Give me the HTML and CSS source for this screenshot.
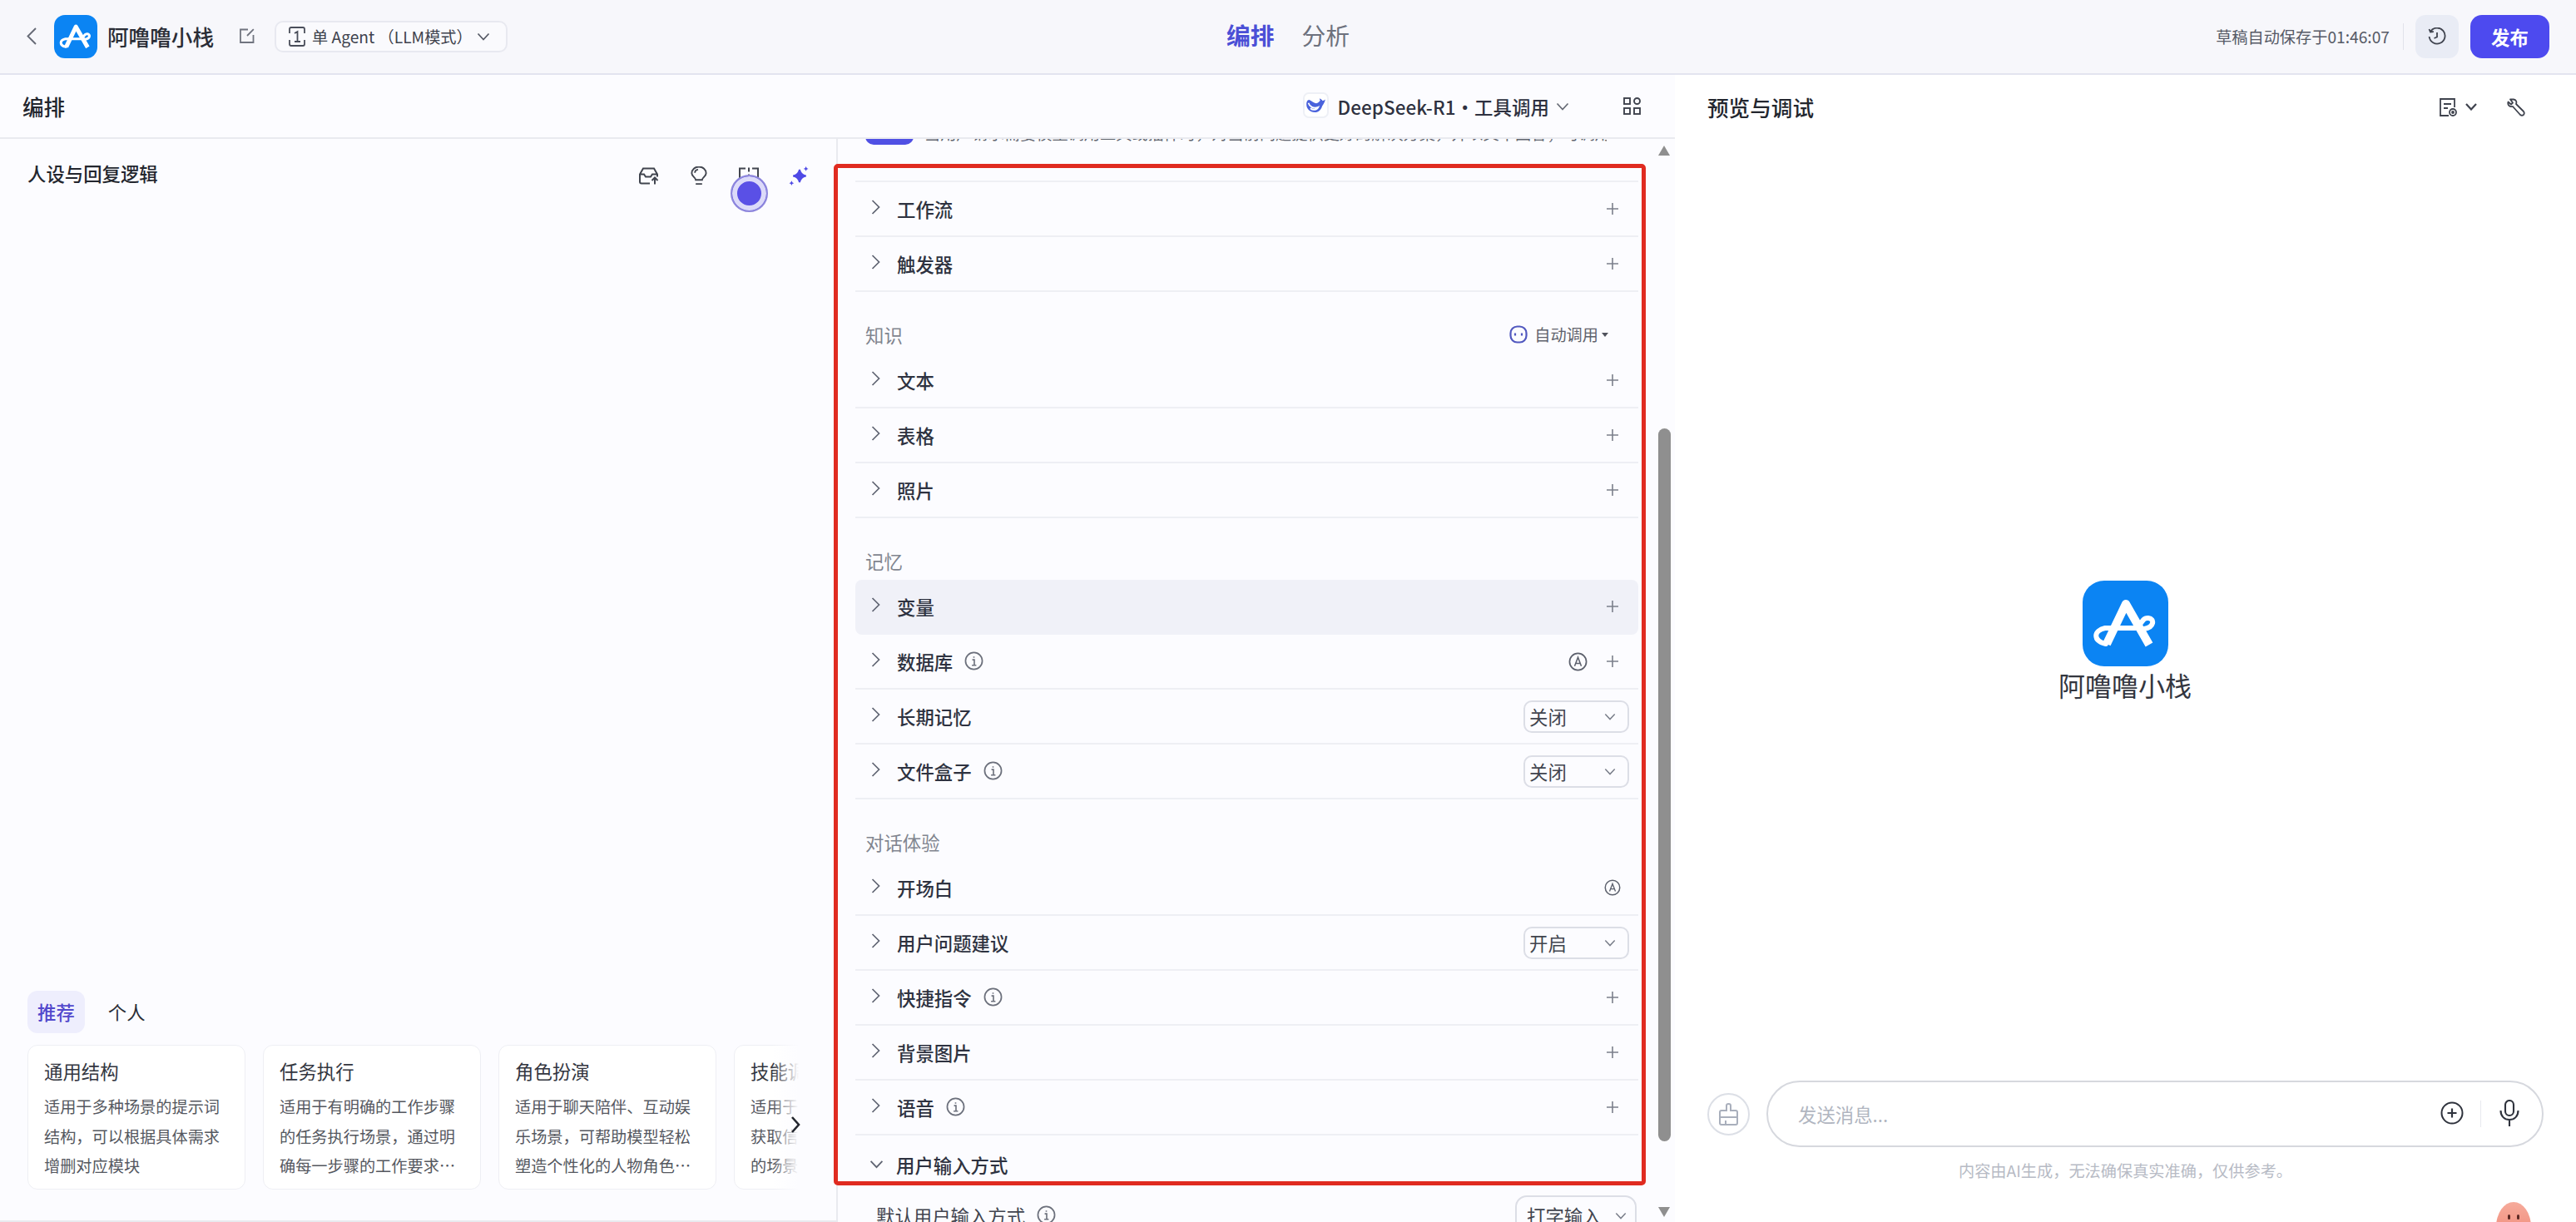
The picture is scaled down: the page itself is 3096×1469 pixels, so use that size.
FILE: index.html
```html
<!DOCTYPE html>
<html lang="zh">
<head>
<meta charset="utf-8">
<title>阿噜噜小栈</title>
<link rel="stylesheet" href="styles.css">
</head>
<body>
<svg class="defs" width="0" height="0" aria-hidden="true">
  <symbol id="logo" viewBox="0 0 103 103">
    <rect width="103" height="103" rx="26" fill="#0b84f3"/>
    <path d="M29 76 L52 28 L80 77" fill="none" stroke="#fff" stroke-width="10" stroke-linejoin="round"/>
    <path d="M28 76 C12 72 13 60 27 57 L65 57 C72 51 72 44 79 45 C87 46 86 56 74 58" fill="none" stroke="#fff" stroke-width="6" stroke-linecap="round"/>
  </symbol>
  <symbol id="chev-r" viewBox="0 0 11 20"><path d="M1.5 2 L9.5 10 L1.5 18" fill="none" stroke="#5f6472" stroke-width="1.7"/></symbol>
  <symbol id="chev-d" viewBox="0 0 16 10"><path d="M1.5 1.5 L8 8.5 L14.5 1.5" fill="none" stroke="currentColor" stroke-width="1.7"/></symbol>
  <symbol id="plus" viewBox="0 0 14 14"><path d="M7 0 V14 M0 7 H14" stroke="#7b7f8b" stroke-width="1.6"/></symbol>
  <symbol id="info" viewBox="0 0 24 24"><circle cx="12" cy="12" r="10.5" fill="none" stroke="#6c707c" stroke-width="1.8"/><path d="M10 10.5 H12.5 V17.5 M9.5 17.5 H15 M12 6.4 V8.2" fill="none" stroke="#6c707c" stroke-width="1.7"/></symbol>
  <symbol id="auto" viewBox="0 0 24 24"><circle cx="12" cy="12" r="10.5" fill="none" stroke="#5d616d" stroke-width="1.8"/><path d="M7.8 17.5 L12 6.5 L16.2 17.5 M9.2 14 H14.8" fill="none" stroke="#5d616d" stroke-width="1.6"/></symbol>
</svg>

<header class="topbar">
  <div class="top-left">
    <svg class="back" viewBox="0 0 12 21"><path d="M11 1 L1.5 10.5 L11 20" fill="none" stroke="#666a75" stroke-width="1.9"/></svg>
    <svg class="logo-sm"><use href="#logo"/></svg>
    <span class="app-name">阿噜噜小栈</span>
    <svg class="edit" viewBox="0 0 18 18"><path d="M10 1.5 H1 V17 H16.5 V8 M16.8 1.2 L9 9" fill="none" stroke="#70747f" stroke-width="1.8"/></svg>
    <div class="mode">
      <svg class="mode-ic" viewBox="0 0 20 24"><path d="M1 8 V3 Q1 1 3 1 H17 Q19 1 19 3 V8 M1 16 V21 Q1 23 3 23 H17 Q19 23 19 21 V16 M7 8 L10.5 6 V18 M7 18 H14" fill="none" stroke="#4a4e5a" stroke-width="1.8"/></svg>
      <span>单 Agent （LLM模式）</span>
      <svg class="mode-chev"><use href="#chev-d"/></svg>
    </div>
  </div>
  <nav class="top-tabs"><span class="tab-on">编排</span><span class="tab-off">分析</span></nav>
  <div class="top-right">
    <span class="saved">草稿自动保存于01:46:07</span>
    <i class="vline"></i>
    <button class="hist"><svg viewBox="0 0 22 22"><path d="M3 5 A9.5 9.5 0 1 1 1.6 11 M1.5 2 L3 5.6 L6.8 5 M11 6 V11.5 L7.5 13" fill="none" stroke="#3f434e" stroke-width="1.8"/></svg></button>
    <button class="publish">发布</button>
  </div>
</header>

<main class="workspace">
  <section class="compose">
    <div class="compose-bar">
      <h2 class="bar-title">编排</h2>
      <div class="model">
        <span class="model-ic"><svg viewBox="0 0 24 18"><path d="M24 1.5 C22.5 3 21.5 3 20.5 3.5 C20 2 18 0.5 16.5 0.5 L17.5 3 C16 5 15 6.5 12.5 6.5 C10 6.5 7 3.5 3.5 2 C1 2 0 5 0 8 C0 13.5 4.5 18 10.5 18 C16 18 19 14 20 10 C21 8.5 23.5 5 24 1.5 Z" fill="#4a62dc"/><path d="M2.5 6 C4 11 9 14 15 11.5 C13 15.5 8 15.5 5 13" fill="none" stroke="#fff" stroke-width="1.9"/></svg></span>
        <span class="model-name">DeepSeek-R1・工具调用</span>
        <svg class="model-chev"><use href="#chev-d"/></svg>
      </div>
      <svg class="grid-ic" viewBox="0 0 21 21"><g fill="none" stroke="#3f434e" stroke-width="1.9"><rect x="1" y="1" width="7" height="7"/><circle cx="16.5" cy="4.5" r="3.5"/><rect x="1" y="13" width="7" height="7"/><rect x="13" y="13" width="7" height="7"/></g></svg>
    </div>
    <div class="compose-body">
      <div class="persona">
        <div class="persona-head">
          <h3 class="persona-title">人设与回复逻辑</h3>
          <div class="persona-tools">
            <svg viewBox="0 0 24 22"><g fill="none" stroke="#41454f" stroke-width="2"><path d="M13 20 H3 Q1 20 1 18 V9 L5 2 H18 L22 9 V12 M1 9 H6 L8 12 H14 L16 9 H22"/><path d="M19 21 V13 M15.5 16.5 L19 13 L22.5 16.5"/></g></svg>
            <svg viewBox="0 0 24 24"><g fill="none" stroke="#41454f" stroke-width="2"><path d="M8 17 C8 14 3 12.5 3 8.5 A9 8 0 0 1 21 8.5 C21 12.5 16 14 16 17 Z"/><path d="M8 22 H16 M7 8 A5 4 0 0 1 11 4"/></g></svg>
            <svg viewBox="0 0 24 20"><g fill="none" stroke="#41454f" stroke-width="2"><path d="M8 1 H1 V19 H8 M16 1 H23 V19 H16"/><path d="M12 0 V5 M12 8 V12 M12 15 V20"/></g></svg>
            <svg viewBox="0 0 24 24"><path d="M13 4 C14 9 16 11 21 12 C16 13 14 15 13 20 C12 15 10 13 5 12 C10 11 12 9 13 4 Z" fill="#4f4ae6" stroke="#4f4ae6" stroke-width="2"/><path d="M21 0 L22 2 L24 3 L22 4 L21 6 L20 4 L18 3 L20 2 Z M3 18 L4 20 L6 21 L4 22 L3 24 L2 22 L0 21 L2 20 Z" fill="#4f4ae6"/></svg>
          </div>
        </div>
        <span class="cursor-dot"></span>
        <div class="tabs">
          <span class="tpl-tab on">推荐</span>
          <span class="tpl-tab">个人</span>
        </div>
        <div class="cards-wrap">
          <div class="cards">
            <article class="card"><h4>通用结构</h4><p>适用于多种场景的提示词结构，可以根据具体需求增删对应模块</p></article>
            <article class="card"><h4>任务执行</h4><p>适用于有明确的工作步骤的任务执行场景，通过明确每一步骤的工作要求，来指导模型完成复杂的任务。</p></article>
            <article class="card"><h4>角色扮演</h4><p>适用于聊天陪伴、互动娱乐场景，可帮助模型轻松塑造个性化的人物角色，并生动演绎。</p></article>
            <article class="card"><h4>技能调用</h4><p>适用于调用插件工作流以获取信息、执行特定操作的场景，可帮助模型完成任务。</p></article>
          </div>
          <div class="fade"><svg viewBox="0 0 12 22"><path d="M2 2 L10 11 L2 20" fill="none" stroke="#23262e" stroke-width="2.6"/></svg></div>
        </div>
      </div>

      <div class="config">
        <div class="stub">
          <span class="stub-btn"></span>
          <span class="stub-text">当用户请求需要模型调用工具或插件时，对当前问题提供更好的解决方案，并以文本回答；可调用工具获取数据，一个合</span>
        </div>

        <div class="row"><svg class="ch"><use href="#chev-r"/></svg><span class="rt">工作流</span><span class="sp"></span><svg class="pl"><use href="#plus"/></svg></div>
        <div class="row"><svg class="ch"><use href="#chev-r"/></svg><span class="rt">触发器</span><span class="sp"></span><svg class="pl"><use href="#plus"/></svg></div>

        <div class="sec"><span>知识</span><div class="auto-call"><svg viewBox="0 0 22 22"><rect x="1.5" y="1.5" width="19" height="19" rx="8" fill="none" stroke="#5158bf" stroke-width="2.2"/><path d="M7 9.5 V12.5 M15 9.5 V12.5" stroke="#5158bf" stroke-width="2.2"/></svg><span>自动调用</span><i class="caret"></i></div></div>
        <div class="row"><svg class="ch"><use href="#chev-r"/></svg><span class="rt">文本</span><span class="sp"></span><svg class="pl"><use href="#plus"/></svg></div>
        <div class="row"><svg class="ch"><use href="#chev-r"/></svg><span class="rt">表格</span><span class="sp"></span><svg class="pl"><use href="#plus"/></svg></div>
        <div class="row"><svg class="ch"><use href="#chev-r"/></svg><span class="rt">照片</span><span class="sp"></span><svg class="pl"><use href="#plus"/></svg></div>

        <div class="sec"><span>记忆</span></div>
        <div class="row hover"><svg class="ch"><use href="#chev-r"/></svg><span class="rt">变量</span><span class="sp"></span><svg class="pl"><use href="#plus"/></svg></div>
        <div class="row"><svg class="ch"><use href="#chev-r"/></svg><span class="rt">数据库</span><svg class="inf"><use href="#info"/></svg><span class="sp"></span><svg class="au"><use href="#auto"/></svg><svg class="pl"><use href="#plus"/></svg></div>
        <div class="row"><svg class="ch"><use href="#chev-r"/></svg><span class="rt">长期记忆</span><span class="sp"></span><div class="sel"><span>关闭</span><svg><use href="#chev-d"/></svg></div></div>
        <div class="row"><svg class="ch"><use href="#chev-r"/></svg><span class="rt">文件盒子</span><svg class="inf"><use href="#info"/></svg><span class="sp"></span><div class="sel"><span>关闭</span><svg><use href="#chev-d"/></svg></div></div>

        <div class="sec"><span>对话体验</span></div>
        <div class="row"><svg class="ch"><use href="#chev-r"/></svg><span class="rt">开场白</span><span class="sp"></span><svg class="au solo"><use href="#auto"/></svg></div>
        <div class="row"><svg class="ch"><use href="#chev-r"/></svg><span class="rt">用户问题建议</span><span class="sp"></span><div class="sel"><span>开启</span><svg><use href="#chev-d"/></svg></div></div>
        <div class="row"><svg class="ch"><use href="#chev-r"/></svg><span class="rt">快捷指令</span><svg class="inf"><use href="#info"/></svg><span class="sp"></span><svg class="pl"><use href="#plus"/></svg></div>
        <div class="row"><svg class="ch"><use href="#chev-r"/></svg><span class="rt">背景图片</span><span class="sp"></span><svg class="pl"><use href="#plus"/></svg></div>
        <div class="row"><svg class="ch"><use href="#chev-r"/></svg><span class="rt">语音</span><svg class="inf"><use href="#info"/></svg><span class="sp"></span><svg class="pl"><use href="#plus"/></svg></div>
        <div class="row open"><svg class="chd"><use href="#chev-d"/></svg><span class="rt">用户输入方式</span></div>
        <div class="subrow"><span>默认用户输入方式</span><svg class="inf"><use href="#info"/></svg><span class="sp"></span><div class="sel wide"><span>打字输入</span><svg><use href="#chev-d"/></svg></div></div>

        <div class="sb">
          <i class="sb-up"></i>
          <i class="sb-thumb"></i>
          <i class="sb-down"></i>
        </div>
      </div>
    </div>
  </section>

  <section class="preview">
    <div class="preview-bar">
      <h2 class="bar-title">预览与调试</h2>
      <div class="preview-tools">
        <svg class="pv-doc" viewBox="0 0 22 24"><g fill="none" stroke="#3f434e" stroke-width="1.8"><path d="M12 22 H2 V2 H19 V12 M6 8 H15 M6 13 H11"/><circle cx="17" cy="18" r="4"/><circle cx="17" cy="18" r="1" fill="#3f434e"/></g></svg>
        <svg class="pv-chev" viewBox="0 0 14 9"><path d="M1 1 L7 7.5 L13 1" fill="none" stroke="#3f434e" stroke-width="2.2"/></svg>
        <svg class="pv-wrench" viewBox="0 0 22 22"><path d="M8 1.5 L4 1.5 L7 5.5 L5 7.5 L1.5 4.5 C0.5 8 3 11 7 10 L16 20 Q18 21.5 20 20 Q21.5 18 20 16 L11 7 C12 4 11 2 8 1.5 Z" fill="none" stroke="#3f434e" stroke-width="1.8" stroke-linejoin="round"/></svg>
      </div>
    </div>
    <div class="preview-hero">
      <svg class="logo-lg"><use href="#logo"/></svg>
      <div class="hero-name">阿噜噜小栈</div>
    </div>
    <div class="chat">
      <div class="chat-row">
        <button class="clean"><svg viewBox="0 0 23 27"><g fill="none" stroke="#a9afbc" stroke-width="2"><path d="M9 9 V3 Q9 1 11.5 1 Q14 1 14 3 V9 H20 Q22 9 22 11 V24 Q22 26 20 26 H3 Q1 26 1 24 V11 Q1 9 3 9 Z M1 17 H22 M8 26 V21"/></g></svg></button>
        <div class="input">
          <span class="ph">发送消息...</span>
          <svg class="add" viewBox="0 0 28 28"><circle cx="14" cy="14" r="12.5" fill="none" stroke="#2f333d" stroke-width="2"/><path d="M14 8.5 V19.5 M8.5 14 H19.5" stroke="#2f333d" stroke-width="2.2"/></svg>
          <i class="in-line"></i>
          <svg class="mic" viewBox="0 0 24 32"><g fill="none" stroke="#2f333d" stroke-width="2.1"><rect x="7" y="1" width="10" height="18" rx="5"/><path d="M1.5 13 C1.5 20 6 24 12 24 C18 24 22.5 20 22.5 13 M12 24 V32"/></g></svg>
        </div>
      </div>
      <p class="disclaimer">内容由AI生成，无法确保真实准确，仅供参考。</p>
    </div>
    <div class="mascot"><i></i><i></i></div>
  </section>

  <div class="redbox"></div>
</main>
</body>
</html>
```

FILE: styles.css
```css
* { box-sizing: border-box; }
html, body { margin: 0; height: 100%; overflow: hidden; }
body {
  font-family: "Noto Sans CJK SC", "Noto Sans", sans-serif;
  color: #23262e;
  background: #fcfcff;
  display: flex;
  flex-direction: column;
}
.defs { position: absolute; }
h2, h3, h4, p { margin: 0; font-weight: inherit; }
i { display: block; font-style: normal; }
button { border: 0; padding: 0; font: inherit; }

/* top bar */
.topbar {
  height: 90px;
  flex: none;
  background: #f7f7fb;
  border-bottom: 2px solid #e3e4ef;
  display: grid;
  grid-template-columns: 1fr auto 1fr;
  align-items: center;
  padding: 0 32px;
}
.top-left { display: flex; align-items: center; }
.back { width: 12px; height: 21px; margin-right: 21px; margin-top: -2px; }
.logo-sm { width: 52px; height: 52px; }
.app-name { font-size: 25.6px; font-weight: 500; margin-left: 12px; line-height: 36px; color: #2a2d36; }
.edit { width: 18px; height: 18px; margin-left: 31px; margin-top: -2px; }
.mode {
  margin-left: 24px;
  width: 280px;
  height: 38px;
  border: 2px solid #e8e9f0;
  border-radius: 10px;
  background: #fafafd;
  display: flex;
  align-items: center;
  padding-left: 15px;
  font-size: 19.2px;
  color: #3f434e;
  white-space: nowrap;
}
.mode-ic { width: 20px; height: 24px; margin-right: 8px; flex: none; }
.mode-chev { width: 16px; height: 10px; margin-left: auto; margin-right: 19px; color: #555965; }
.top-tabs { display: flex; gap: 33px; font-size: 28.8px; line-height: 42px; margin-top: -4px; }
.tab-on { color: #4b4fd6; font-weight: 700; }
.tab-off { color: #6d717d; }
.top-right { display: flex; align-items: center; justify-content: flex-end; }
.saved { font-size: 19.2px; color: #565a66; }
.vline { width: 1px; height: 32px; background: #e2e3ea; margin: 0 14px 0 16px; }
.hist { width: 52px; height: 52px; border-radius: 12px; background: #e9ecf5; display: flex; align-items: center; justify-content: center; }
.hist svg { width: 22px; height: 22px; }
.publish { width: 95px; height: 52px; margin-left: 14px; border-radius: 14px; background: #4d4aef; color: #fff; font-size: 22.4px; font-weight: 700; }

/* workspace */
.workspace { flex: 1; min-height: 0; display: flex; position: relative; }
.compose { width: 2013px; flex: none; display: flex; flex-direction: column; }
.compose-bar {
  height: 77px;
  flex: none;
  border-bottom: 2px solid #e9eaef;
  display: flex;
  align-items: center;
  padding: 0 41px 0 27px;
  background: #fcfcff;
}
.bar-title { font-size: 25.6px; font-weight: 500; line-height: 36px; color: #23262e; }
.model { margin-left: auto; display: flex; align-items: center; }
.model-ic { width: 31px; height: 31px; border: 2px solid #eef0f6; border-radius: 7px; background: #fff; display: flex; align-items: center; justify-content: center; margin-right: 10px; margin-top: -2px; }
.model-ic svg { width: 23px; height: 17px; }
.model-name { font-size: 22.4px; font-weight: 500; color: #2e3140; letter-spacing: 0.1px; }
.model-chev { width: 16px; height: 10px; margin-left: 8px; color: #666a75; }
.grid-ic { width: 21px; height: 21px; margin-left: 65px; }
.compose-body { flex: 1; min-height: 0; display: flex; }

/* left: persona */
.persona {
  width: 1007px;
  flex: none;
  padding: 0 31px 0 33px;
  display: flex;
  flex-direction: column;
  position: relative;
  border-right: 2px solid #e9eaef;
  border-bottom: 2px solid #e9eaef;
}
.persona-head { display: flex; align-items: center; justify-content: space-between; padding: 24px 2px 0 0; }
.persona-title { font-size: 22.4px; font-weight: 500; line-height: 34px; margin-bottom: 6px; }
.persona-tools { display: flex; gap: 36px; align-items: center; }
.persona-tools svg { width: 24px; height: 23px; }
.cursor-dot {
  position: absolute;
  left: 878px;
  top: 43px;
  width: 45px;
  height: 45px;
  border-radius: 50%;
  background: #5a50e6;
  border: 2px solid #8e87dc;
  box-shadow: inset 0 0 0 6px #dcdaf9;
}
.tabs { margin-top: auto; display: flex; gap: 28px; align-items: center; margin-bottom: 14px; }
.tpl-tab { font-size: 22.4px; line-height: 51px; color: #2a2d36; }
.tpl-tab.on { padding: 0 12px; background: #eeeefd; border-radius: 12px; color: #5248cc; font-weight: 500; }
.cards-wrap { position: relative; padding-bottom: 37px; }
.cards { display: flex; gap: 21px; overflow: hidden; }
.card {
  flex: 0 0 262px;
  height: 174px;
  background: #fff;
  border: 1px solid #eeeff4;
  border-radius: 12px;
  padding: 12px 19px;
}
.card h4 { font-size: 22.4px; line-height: 36px; color: #33363f; margin-bottom: 8px; }
.card p {
  font-size: 19.2px;
  line-height: 35.5px;
  color: #55585f;
  display: -webkit-box;
  -webkit-box-orient: vertical;
  -webkit-line-clamp: 3;
  overflow: hidden;
}
.fade {
  position: absolute;
  right: 0;
  top: 0;
  bottom: 19px;
  width: 46px;
  background: linear-gradient(to right, rgba(252,252,255,0), #fcfcff 70%);
}
.fade svg { position: absolute; right: 12px; top: 83px; width: 12px; height: 26px; }

/* middle: configuration */
.config { width: 1006px; flex: none; position: relative; overflow: hidden; padding-left: 21px; background: #fcfcff; }
.config > .row, .config > .sec, .config > .subrow, .config > .stub { width: 941px; }
.stub {
  height: 52px;
  border-bottom: 2px solid #eeeff4;
  display: flex;
  padding-left: 12px;
  overflow: hidden;
}
.stub-btn { flex: none; width: 58px; height: 24px; margin-top: -17px; border-radius: 0 0 10px 10px; background: #5050e4; }
.stub-text { flex: none; margin: -22px 0 0 13px; width: 820px; height: 30px; overflow: hidden; white-space: nowrap; font-size: 19.2px; line-height: 30px; color: #62666f; }
.row {
  height: 66px;
  display: flex;
  align-items: center;
  border-bottom: 2px solid #eeeff4;
  padding: 0 11px 0 19px;
}
.row.hover { background: #f0f1f8; border-bottom-color: transparent; border-radius: 8px; }
.row.open { border-bottom: 0; padding-top: 4px; }
.ch { width: 11px; height: 20px; margin-right: 20px; margin-top: -4px; flex: none; }
.chd { width: 17px; height: 11px; margin: -2px 15px 0 -2px; color: #5f6472; flex: none; }
.rt { font-size: 22.4px; font-weight: 500; color: #2e3240; line-height: 32px; }
.sp { flex: 1; }
.inf { width: 23px; height: 23px; margin-left: 14px; margin-top: -2px; flex: none; }
.pl { width: 14px; height: 14px; margin-right: 13px; flex: none; }
.au { width: 23px; height: 23px; margin-right: 23px; flex: none; }
.au.solo { width: 20px; height: 20px; margin-right: 10px; }
.sel {
  width: 127px;
  height: 39px;
  border: 2px solid #dcdee6;
  border-radius: 10px;
  display: flex;
  align-items: center;
  justify-content: space-between;
  padding: 0 14px 0 5px;
  font-size: 22.4px;
  color: #41444e;
  background: #fcfcff;
}
.sel svg { width: 14px; height: 9px; color: #7b7f8b; }
.sec {
  height: 74px;
  padding: 36px 36px 8px 12px;
  display: flex;
  align-items: center;
  justify-content: space-between;
  font-size: 22.4px;
  color: #81858f;
}
.auto-call { display: flex; align-items: center; font-size: 19.2px; color: #5f626c; }
.auto-call svg { width: 22px; height: 22px; margin-right: 8px; }
.caret { width: 0; height: 0; margin-left: 4px; border: 4px solid transparent; border-top: 5px solid #4f525c; border-bottom: 0; }
.subrow { display: flex; align-items: center; height: 66px; padding: 0 2px 0 25px; margin-top: -3px; font-size: 22.4px; color: #41444e; }
.sel.wide { width: 146px; height: 48px; border-radius: 14px; padding: 0 10px 0 12px; white-space: nowrap; }

/* scrollbar */
.sb { position: absolute; right: 5px; top: 0; bottom: 0; width: 15px; }
.sb-up, .sb-down { position: absolute; left: 0; width: 0; height: 0; border-left: 7.5px solid transparent; border-right: 7.5px solid transparent; }
.sb-up { top: 8px; border-bottom: 12px solid #8f8f8f; }
.sb-down { bottom: 6px; border-top: 12px solid #8f8f8f; }
.sb-thumb { position: absolute; top: 348px; left: 0; right: 0; height: 857px; background: #8f8f8f; border-radius: 8px; }

/* right: preview */
.preview { flex: 1; min-width: 0; display: flex; flex-direction: column; background: #fff; position: relative; overflow: hidden; }
.preview-bar { height: 77px; flex: none; display: flex; align-items: center; justify-content: space-between; padding: 0 60px 0 39px; }
.preview-tools { display: flex; align-items: center; }
.pv-doc { width: 22px; height: 24px; }
.pv-chev { width: 14px; height: 9px; margin-left: 10px; }
.pv-wrench { width: 22px; height: 22px; margin-left: 36px; margin-right: 1px; }
.preview-hero { padding-top: 531px; display: flex; flex-direction: column; align-items: center; margin-left: -1px; }
.logo-lg { width: 103px; height: 103px; }
.hero-name { font-size: 32px; line-height: 46px; margin-top: -1px; color: #33363f; }
.chat { margin-top: auto; padding: 0 39px 47px; }
.chat-row { display: flex; align-items: center; gap: 20px; }
.clean { flex: none; width: 51px; height: 51px; border-radius: 50%; border: 2px solid #dcdfe6; background: #fff; display: flex; align-items: center; justify-content: center; }
.clean svg { width: 23px; height: 27px; }
.input {
  flex: 1;
  height: 80px;
  border: 2px solid #d6d8de;
  border-radius: 40px;
  display: flex;
  align-items: center;
  padding: 0 27px 0 36px;
}
.ph { flex: 1; font-size: 22.4px; color: #b0b5c0; }
.add { width: 28px; height: 28px; margin-top: -2px; }
.in-line { width: 1px; height: 32px; background: #e8e9ee; margin: 0 22px 0 20px; }
.mic { width: 24px; height: 32px; margin-top: -2px; }
.disclaimer { text-align: center; font-size: 19.2px; line-height: 30px; margin-top: 13px; color: #b7bbc5; }
.mascot {
  position: absolute;
  left: 987px;
  top: 1355px;
  width: 42px;
  height: 60px;
  border-radius: 50%;
  background: linear-gradient(to bottom, #f6ab9b, #ee7d6c);
  display: flex;
  gap: 8px;
  justify-content: center;
  padding-top: 15px;
}
.mascot i { width: 3px; height: 6px; border-radius: 2px; background: #5d2a24; }

/* annotation */
.redbox {
  position: absolute;
  left: 1002px;
  top: 107px;
  width: 976px;
  height: 1228px;
  border: 5px solid #e02b20;
  border-radius: 5px;
  pointer-events: none;
}
```
